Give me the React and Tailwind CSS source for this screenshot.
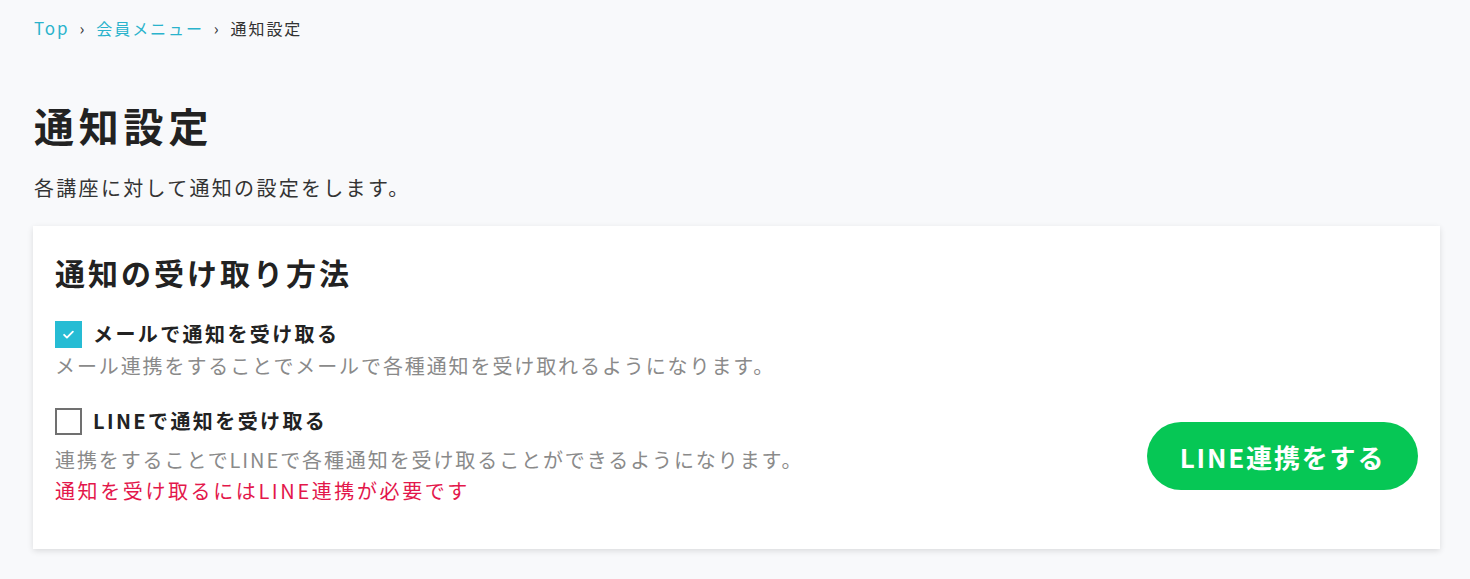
import { useState } from 'react'

const font = { fontFamily: '"Noto Sans CJK JP", "Noto Sans", sans-serif' }

function Checkbox({ checked, onChange }) {
  return (
    <button
      onClick={onChange}
      className={
        checked
          ? 'w-[27px] h-[27px] bg-[#26bcd4] flex items-center justify-center shrink-0'
          : 'w-[27px] h-[27px] border-2 border-[#707070] bg-white shrink-0'
      }
    >
      {checked && (
        <svg className="w-[15px] h-[15px]" viewBox="0 0 24 24" fill="none" stroke="white" strokeWidth={3} strokeLinecap="round" strokeLinejoin="round">
          <path d="M5 12.5l4.5 4.5L19 7.5" />
        </svg>
      )}
    </button>
  )
}

export default function App() {
  const [mail, setMail] = useState(true)
  const [line, setLine] = useState(false)

  return (
    <div className="min-h-screen bg-[#f8f9fb] pl-[33px] pr-[30px] pt-4 pb-8 text-[#222]" style={font}>
      <nav className="flex items-center text-[16px] leading-6 tracking-[0.12em] ml-[1px]">
        <a className="text-[#2ab3cc] text-[17px]">Top</a>
        <span className="mx-[10px] text-[16px] text-[#333]">›</span>
        <a className="text-[#2ab3cc]">会員メニュー</a>
        <span className="mx-[10px] text-[16px] text-[#333]">›</span>
        <span className="text-[#333]">通知設定</span>
      </nav>

      <h1 className="mt-[55px] ml-[1px] text-[40px] leading-[60px] font-bold tracking-[0.12em]">通知設定</h1>
      <p className="mt-[18px] ml-[1px] text-[20px] leading-[30px] tracking-[0.115em] text-[#333]">各講座に対して通知の設定をします。</p>

      <section className="mt-[23px] bg-white shadow-[0_2px_6px_rgba(0,0,0,0.12)] pl-[22px] pr-[22px] pt-[24px] pb-[43px]">
        <h2 className="text-[30px] leading-[45px] font-bold tracking-[0.1em]">通知の受け取り方法</h2>

        <div className="mt-[24px]">
          <label className="flex items-center gap-[11px] h-[30px]">
            <Checkbox checked={mail} onChange={() => setMail(!mail)} />
            <span className="text-[20px] font-bold tracking-[0.12em]">メールで通知を受け取る</span>
          </label>
          <p className="mt-[2px] text-[20px] leading-[30px] tracking-[0.095em] text-[#8a8a8a]">
            メール連携をすることでメールで各種通知を受け取れるようになります。
          </p>
        </div>

        <div className="mt-[25px] flex items-center justify-between">
          <div>
            <label className="flex items-center gap-[11px] h-[30px]">
              <Checkbox checked={line} onChange={() => setLine(!line)} />
              <span className="text-[20px] font-bold tracking-[0.12em]">LINEで通知を受け取る</span>
            </label>
            <p className="mt-[9px] text-[20px] leading-[30px] tracking-[0.095em] text-[#8a8a8a]">
              連携をすることでLINEで各種通知を受け取ることができるようになります。
            </p>
            <p className="mt-[1px] text-[20px] leading-[30px] tracking-[0.13em] text-[#e3174b]">
              通知を受け取るにはLINE連携が必要です
            </p>
          </div>
          <button className="w-[271px] h-[68px] rounded-full bg-[#06c755] text-white text-[26px] font-bold tracking-[0.07em]">
            LINE連携をする
          </button>
        </div>
      </section>
    </div>
  )
}
